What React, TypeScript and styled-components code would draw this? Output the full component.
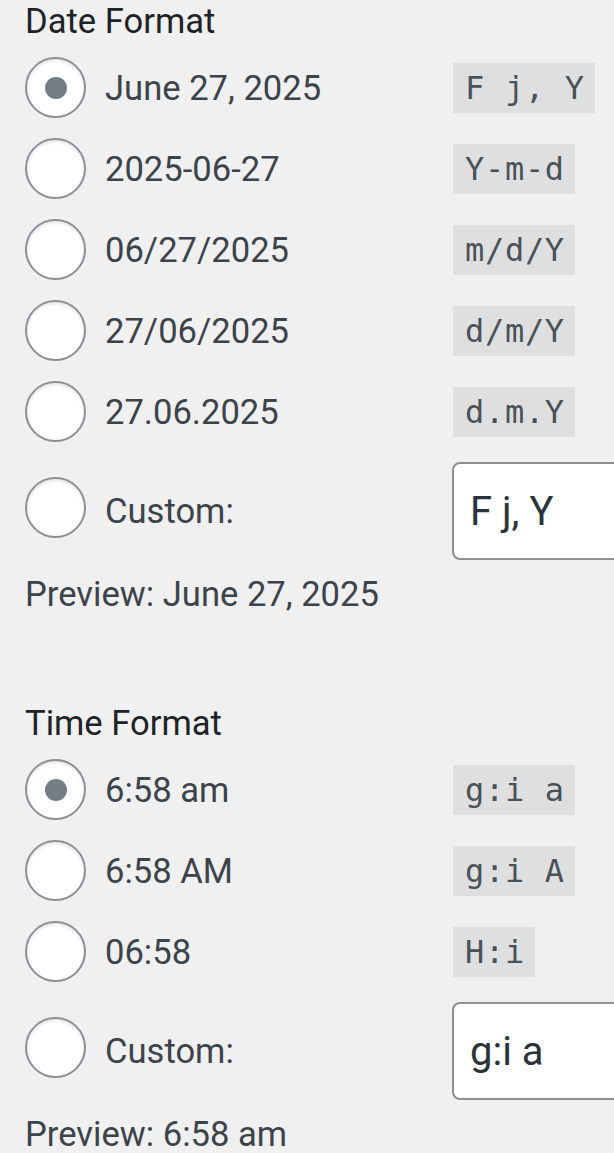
import React from "react";
import styled, { createGlobalStyle } from "styled-components";

const Global = createGlobalStyle`
  html, body {
    margin: 0;
    padding: 0;
    background: #f0f0f1;
    overflow: hidden;
  }
  body {
    font-family: Roboto, "Liberation Sans", sans-serif;
    color: #3c434a;
  }
`;

const Page = styled.div`
  width: 614px;
  height: 1153px;
  box-sizing: border-box;
  padding: 1px 0 0 25px;
  overflow: hidden;
  display: flex;
  flex-direction: column;
`;

const Section = styled.fieldset<{ $gapTop?: number }>`
  border: 0;
  margin: ${(p) => p.$gapTop ?? 0}px 0 0 0;
  padding: 0;
  min-width: 0;
  display: flex;
  flex-direction: column;
`;

const Heading = styled.legend`
  padding: 0;
  margin: 0;
  font-size: 34.6px;
  line-height: 40px;
  height: 40px;
  font-weight: 400;
  color: #1d2327;
`;

const Options = styled.div`
  display: flex;
  flex-direction: column;
  gap: 20px;
  margin-top: 16px;
`;

const Row = styled.label<{ $tall?: boolean }>`
  display: flex;
  align-items: center;
  height: ${(p) => (p.$tall ? 98 : 61)}px;
`;

const Radio = styled.span<{ $checked?: boolean; $lift?: boolean }>`
  flex: 0 0 auto;
  box-sizing: border-box;
  width: 61px;
  height: 61px;
  border-radius: 50%;
  border: 2px solid #8c8f94;
  background: #fff;
  box-shadow: inset 0 2px 3px rgba(0, 0, 0, 0.1);
  display: flex;
  align-items: center;
  justify-content: center;
  margin-right: 19px;
  margin-bottom: ${(p) => (p.$lift ? 7 : 0)}px;
  &::after {
    content: "";
    display: ${(p) => (p.$checked ? "block" : "none")};
    width: 22px;
    height: 22px;
    border-radius: 50%;
    background: #757d86;
  }
`;

const Label = styled.span`
  flex: 0 0 348px;
  font-size: 34.6px;
  line-height: 40px;
  color: #3c434a;
  white-space: nowrap;
`;

const Code = styled.code`
  display: inline-block;
  height: 50px;
  line-height: 50px;
  padding: 0 10px 0 12px;
  background: rgba(0, 0, 0, 0.07);
  font-family: "DejaVu Sans Mono", "Liberation Mono", monospace;
  font-size: 32px;
  letter-spacing: 0.7px;
  color: #4a5259;
  white-space: pre;
`;

const Input = styled.input`
  flex: 0 0 auto;
  box-sizing: border-box;
  width: 320px;
  height: 98px;
  margin-left: -1px;
  padding: 0 16px;
  border: 2px solid #8c8f94;
  border-radius: 8px;
  background: #fff;
  font-family: Roboto, "Liberation Sans", sans-serif;
  font-size: 40px;
  color: #2c3338;
  outline: none;
`;

const Preview = styled.p`
  margin: 14px 0 0 0;
  font-size: 34.6px;
  line-height: 40px;
  color: #3c434a;
  white-space: nowrap;
`;

type Opt = { label: string; code: string; checked?: boolean };

const dateOpts: Opt[] = [
  { label: "June 27, 2025", code: "F j, Y", checked: true },
  { label: "2025-06-27", code: "Y-m-d" },
  { label: "06/27/2025", code: "m/d/Y" },
  { label: "27/06/2025", code: "d/m/Y" },
  { label: "27.06.2025", code: "d.m.Y" },
];

const timeOpts: Opt[] = [
  { label: "6:58 am", code: "g:i a", checked: true },
  { label: "6:58 AM", code: "g:i A" },
  { label: "06:58", code: "H:i" },
];

function FormatGroup({
  title,
  opts,
  custom,
  preview,
  gapTop,
}: {
  title: string;
  opts: Opt[];
  custom: string;
  preview: string;
  gapTop?: number;
}) {
  return (
    <Section $gapTop={gapTop}>
      <Heading>{title}</Heading>
      <Options>
        {opts.map((o) => (
          <Row key={o.code}>
            <Radio $checked={o.checked} />
            <Label>{o.label}</Label>
            <Code>{o.code}</Code>
          </Row>
        ))}
        <Row $tall>
          <Radio $lift />
          <Label>Custom:</Label>
          <Input defaultValue={custom} />
        </Row>
      </Options>
      <Preview>Preview: {preview}</Preview>
    </Section>
  );
}

export default function App() {
  return (
    <>
      <Global />
      <Page>
        <FormatGroup
          title="Date Format"
          opts={dateOpts}
          custom="F j, Y"
          preview="June 27, 2025"
        />
        <FormatGroup
          title="Time Format"
          opts={timeOpts}
          custom="g:i a"
          preview="6:58 am"
          gapTop={89}
        />
      </Page>
    </>
  );
}
